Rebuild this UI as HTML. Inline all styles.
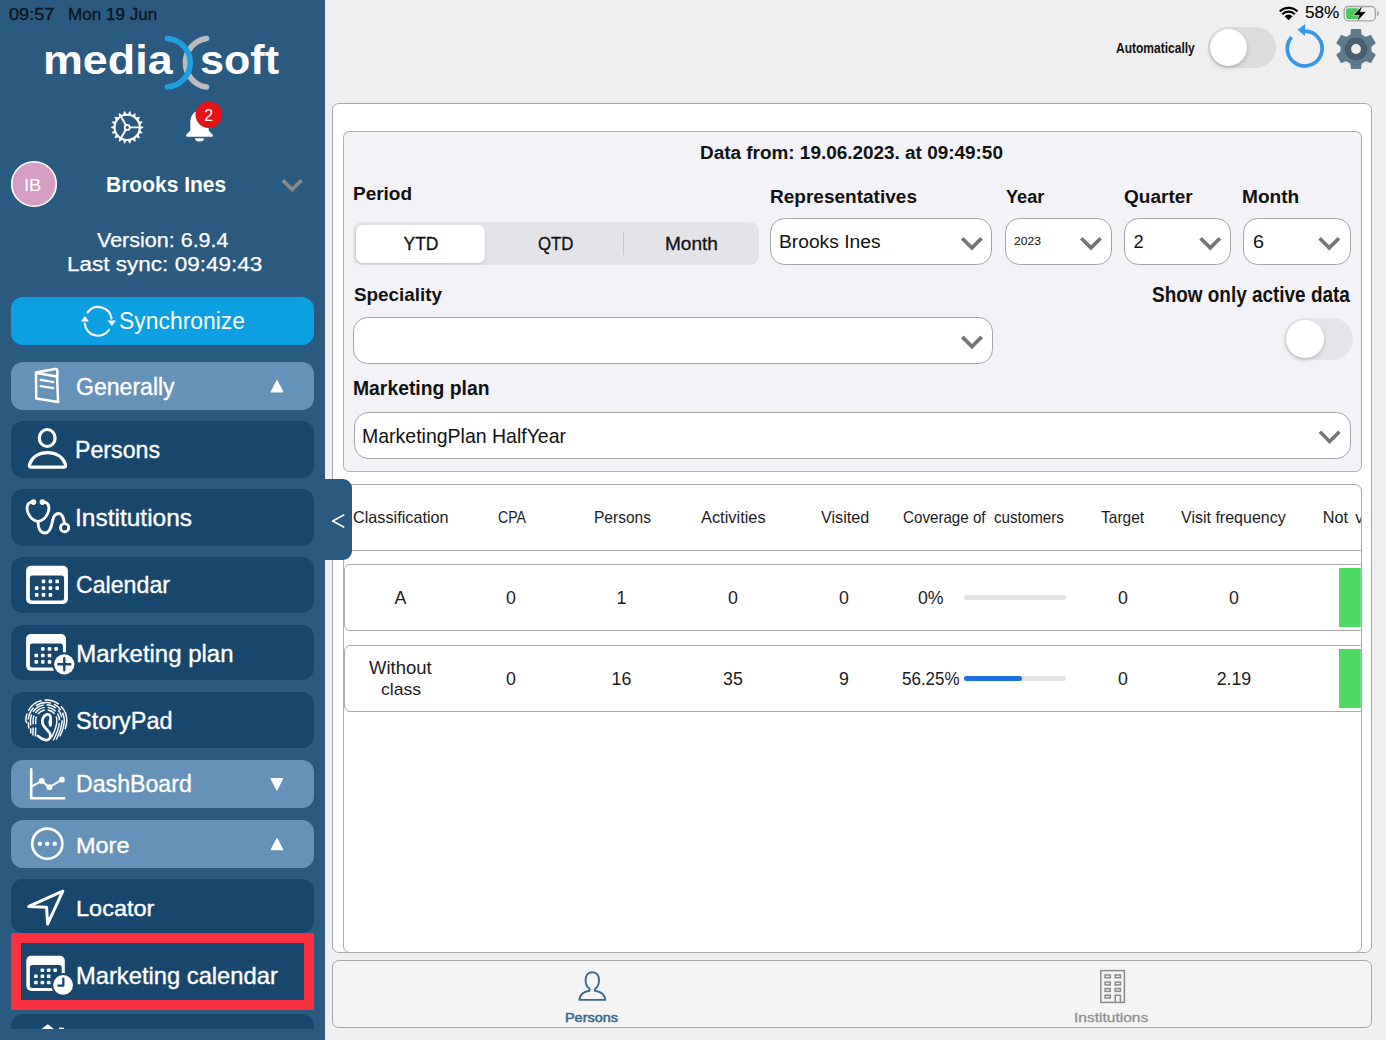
<!DOCTYPE html>
<html><head><meta charset="utf-8"><style>
html,body{margin:0;padding:0;background:#efeff0;}
#root{position:relative;width:1386px;height:1040px;overflow:hidden;background:#efeff0;font-family:"Liberation Sans", sans-serif;}
.a{position:absolute;box-sizing:border-box;}
.t{position:absolute;white-space:pre;transform-origin:0 0;font-family:"Liberation Sans", sans-serif;}
svg{position:absolute;overflow:visible;}
.item{position:absolute;left:11px;width:303px;border-radius:12px;background:#18476e;}
.hdr{position:absolute;left:11px;width:303px;border-radius:12px;background:#6592b8;}
.dd{position:absolute;box-sizing:border-box;background:#fff;border:1.4px solid #a4a4a6;border-radius:14.5px;}
.row{position:absolute;box-sizing:border-box;background:#fff;border:1px solid #ababab;border-radius:6px;}

</style></head><body><div id=root>
<!-- sidebar -->
<div class=a style="left:0;top:0;width:325px;height:1040px;background:#2b5a80;"></div>
<div class=a style="left:325px;top:0;width:1.5px;height:1040px;background:#e6eef6;"></div>
<div class=a style="left:11px;top:297px;width:303px;height:48px;border-radius:12px;background:#0c9fe2;"></div>
<div class=hdr style="top:362px;height:48px;"></div>
<div class=item style="top:421px;height:57px;"></div>
<div class=item style="top:489px;height:57px;"></div>
<div class=item style="top:557px;height:56px;"></div>
<div class=item style="top:625px;height:55px;"></div>
<div class=item style="top:692px;height:56px;"></div>
<div class=hdr style="top:760px;height:48px;"></div>
<div class=hdr style="top:820px;height:48px;"></div>
<div class=item style="top:879px;height:54px;"></div>
<div class=item style="top:943px;height:57px;"></div>
<div class=a style="left:11px;top:1014px;width:303px;height:15px;border-radius:12px 12px 0 0;background:#18476e;"></div>
<!-- red highlight -->
<div class=a style="left:10.5px;top:933px;width:303px;height:77px;border:10.5px solid #f8303f;"></div>

<!-- main card -->
<div class=a style="left:332px;top:103px;width:1040px;height:850px;background:#fff;border:1.2px solid #a8a8a8;border-radius:7px;"></div>
<!-- filter panel -->
<div class=a style="left:343px;top:130.5px;width:1018.5px;height:341.5px;background:#f2f2f7;border:1.4px solid #adadb0;border-radius:6.5px;"></div>
<!-- segmented -->
<div class=a style="left:353.3px;top:222px;width:405.7px;height:43px;background:#e3e3e8;border-radius:9px;"></div>
<div class=a style="left:356px;top:224.6px;width:129px;height:38.1px;background:#fff;border-radius:7px;box-shadow:0 1px 3px rgba(0,0,0,0.15);"></div>
<div class=a style="left:623px;top:232px;width:1px;height:23px;background:#c8c8cc;"></div>
<!-- dropdowns -->
<div class=dd style="left:770.4px;top:218.3px;width:222.1px;height:46.3px;"></div>
<div class=dd style="left:1004.7px;top:218.3px;width:107.4px;height:46.3px;"></div>
<div class=dd style="left:1124px;top:218.3px;width:107.2px;height:46.3px;"></div>
<div class=dd style="left:1243px;top:218.3px;width:107.8px;height:46.3px;"></div>
<div class=dd style="left:353.3px;top:317.3px;width:639.3px;height:46.5px;"></div>
<div class=dd style="left:353.5px;top:412px;width:997px;height:46.7px;"></div>
<!-- toggle active data -->
<div class=a style="left:1284px;top:318px;width:69px;height:41.5px;border-radius:21px;background:#e4e4e9;"></div>
<div class=a style="left:1285.5px;top:319.5px;width:38.5px;height:38.5px;border-radius:50%;background:#fff;box-shadow:0 2px 4px rgba(0,0,0,0.18);"></div>
<!-- toggle automatically -->
<div class=a style="left:1207.5px;top:27px;width:68.3px;height:41.2px;border-radius:21px;background:#dcdcde;"></div>
<div class=a style="left:1209.5px;top:29px;width:37.2px;height:37.2px;border-radius:50%;background:#fff;box-shadow:0 2px 4px rgba(0,0,0,0.2);"></div>

<!-- table container -->
<div class=a style="left:343px;top:484px;width:1018.5px;height:469px;background:#fff;border:1.4px solid #aaaaaa;border-radius:7px;"></div>
<div class=a style="left:0;top:0;width:1386px;height:1040px;clip-path:inset(485px 25.2px 88px 344px);">
<div class=a style="left:343px;top:549.8px;width:1018px;height:1.2px;background:#aaaaaa;"></div>
<div class=row style="left:344px;top:564.2px;width:1040px;height:67.1px;"></div>
<div class=row style="left:344px;top:644.5px;width:1040px;height:67.7px;"></div>
<div class=a style="left:963.8px;top:595px;width:102.2px;height:5.3px;border-radius:3px;background:#e3e3e5;"></div>
<div class=a style="left:963.8px;top:675.7px;width:102.2px;height:5.3px;border-radius:3px;background:#e3e3e5;"></div>
<div class=a style="left:963.8px;top:675.7px;width:58.2px;height:5.3px;border-radius:3px;background:#1a72e0;"></div>
<div class=a style="left:1339px;top:568.2px;width:40px;height:59px;background:#4cd964;"></div>
<div class=a style="left:1339px;top:649px;width:40px;height:59px;background:#4cd964;"></div>
<div class=t style="left:353.20px;top:509.00px;font-size:16.28px;line-height:16.28px;font-weight:400;color:#1c1c1e;transform:scaleX(0.9971);">Classification</div>
<div class=t style="left:497.50px;top:509.00px;font-size:16.28px;line-height:16.28px;font-weight:400;color:#1c1c1e;transform:scaleX(0.8676);">CPA</div>
<div class=t style="left:593.55px;top:509.00px;font-size:16.28px;line-height:16.28px;font-weight:400;color:#1c1c1e;transform:scaleX(0.9532);">Persons</div>
<div class=t style="left:701.20px;top:509.00px;font-size:16.28px;line-height:16.28px;font-weight:400;color:#1c1c1e;transform:scaleX(1.0072);">Activities</div>
<div class=t style="left:820.70px;top:509.00px;font-size:16.28px;line-height:16.28px;font-weight:400;color:#1c1c1e;transform:scaleX(0.9941);">Visited</div>
<div class=t style="left:903.00px;top:509.00px;font-size:16.28px;line-height:16.28px;font-weight:400;color:#1c1c1e;transform:scaleX(0.9320);">Coverage of  customers</div>
<div class=t style="left:1101.40px;top:509.00px;font-size:16.28px;line-height:16.28px;font-weight:400;color:#1c1c1e;transform:scaleX(0.9543);">Target</div>
<div class=t style="left:1181.40px;top:509.00px;font-size:16.28px;line-height:16.28px;font-weight:400;color:#1c1c1e;transform:scaleX(0.9846);">Visit frequency</div>
<div class=t style="left:1322.80px;top:509.00px;font-size:16.28px;line-height:16.28px;font-weight:400;color:#1c1c1e;word-spacing:2.5px;">Not visited</div>
<div class=t style="left:394.60px;top:590.00px;font-size:17.8px;line-height:17.8px;font-weight:400;color:#1c1c1e;">A</div>
<div class=t style="left:506.00px;top:590.00px;font-size:17.8px;line-height:17.8px;font-weight:400;color:#1c1c1e;">0</div>
<div class=t style="left:616.50px;top:590.00px;font-size:17.8px;line-height:17.8px;font-weight:400;color:#1c1c1e;">1</div>
<div class=t style="left:728.00px;top:590.00px;font-size:17.8px;line-height:17.8px;font-weight:400;color:#1c1c1e;">0</div>
<div class=t style="left:839.00px;top:590.00px;font-size:17.8px;line-height:17.8px;font-weight:400;color:#1c1c1e;">0</div>
<div class=t style="left:1118.00px;top:590.00px;font-size:17.8px;line-height:17.8px;font-weight:400;color:#1c1c1e;">0</div>
<div class=t style="left:1229.00px;top:590.00px;font-size:17.8px;line-height:17.8px;font-weight:400;color:#1c1c1e;">0</div>
<div class=t style="left:918.20px;top:589.00px;font-size:18.02px;line-height:18.02px;font-weight:400;color:#1c1c1e;transform:scaleX(0.9839);">0%</div>
<div class=t style="left:506.00px;top:671.00px;font-size:17.8px;line-height:17.8px;font-weight:400;color:#1c1c1e;">0</div>
<div class=t style="left:611.56px;top:671.00px;font-size:17.8px;line-height:17.8px;font-weight:400;color:#1c1c1e;">16</div>
<div class=t style="left:723.06px;top:671.00px;font-size:17.8px;line-height:17.8px;font-weight:400;color:#1c1c1e;">35</div>
<div class=t style="left:839.00px;top:671.00px;font-size:17.8px;line-height:17.8px;font-weight:400;color:#1c1c1e;">9</div>
<div class=t style="left:1118.00px;top:671.00px;font-size:17.8px;line-height:17.8px;font-weight:400;color:#1c1c1e;">0</div>
<div class=t style="left:1216.64px;top:671.00px;font-size:17.8px;line-height:17.8px;font-weight:400;color:#1c1c1e;">2.19</div>
<div class=t style="left:902.30px;top:671.00px;font-size:17.88px;line-height:17.88px;font-weight:400;color:#1c1c1e;transform:scaleX(0.9507);">56.25%</div>
<div class=t style="left:369.30px;top:659.00px;font-size:18.02px;line-height:18.02px;font-weight:400;color:#1c1c1e;transform:scaleX(1.0267);">Without</div>
<div class=t style="left:380.60px;top:681.00px;font-size:17.0px;line-height:17.0px;font-weight:400;color:#1c1c1e;transform:scaleX(1.0358);">class</div>
</div>

<!-- tab bar -->
<div class=a style="left:332px;top:959.8px;width:1040px;height:67.8px;background:#f4f4f4;border:1.2px solid #a8a8a8;border-radius:7px;"></div>

<svg width="1386" height="1040" style="left:0;top:0;" viewBox="0 0 1386 1040">
<!-- logo arcs -->
<path d="M206.5,38.5 A24.5,24.5 0 0 0 206.5,87" fill="none" stroke="#b8bcc3" stroke-width="5.6" stroke-linecap="round"/>
<path d="M167.5,38.5 A24.3,24.3 0 0 1 167.5,87" fill="none" stroke="#1fa0de" stroke-width="5.6" stroke-linecap="round"/>
<!-- sidebar gear -->
<g transform="translate(127.2,127.4)" fill="none" stroke="#fff">
  <circle r="12.6" stroke-width="2.1"/>
  <circle r="2.5" stroke-width="1.8"/>
  <path d="M2.5,0 L12.6,0 M-1.25,-2.17 L-6.3,-10.9 M-1.25,2.17 L-6.3,10.9" stroke-width="1.9"/>
  <g fill="#fff" stroke="none">
    <path d="M12.6,-1.9 L16.2,-0.45 L16.2,0.45 L12.6,1.9 Z" transform="rotate(0)"/>
    <path d="M12.6,-1.9 L16.2,-0.45 L16.2,0.45 L12.6,1.9 Z" transform="rotate(20)"/>
    <path d="M12.6,-1.9 L16.2,-0.45 L16.2,0.45 L12.6,1.9 Z" transform="rotate(40)"/>
    <path d="M12.6,-1.9 L16.2,-0.45 L16.2,0.45 L12.6,1.9 Z" transform="rotate(60)"/>
    <path d="M12.6,-1.9 L16.2,-0.45 L16.2,0.45 L12.6,1.9 Z" transform="rotate(80)"/>
    <path d="M12.6,-1.9 L16.2,-0.45 L16.2,0.45 L12.6,1.9 Z" transform="rotate(100)"/>
    <path d="M12.6,-1.9 L16.2,-0.45 L16.2,0.45 L12.6,1.9 Z" transform="rotate(120)"/>
    <path d="M12.6,-1.9 L16.2,-0.45 L16.2,0.45 L12.6,1.9 Z" transform="rotate(140)"/>
    <path d="M12.6,-1.9 L16.2,-0.45 L16.2,0.45 L12.6,1.9 Z" transform="rotate(160)"/>
    <path d="M12.6,-1.9 L16.2,-0.45 L16.2,0.45 L12.6,1.9 Z" transform="rotate(180)"/>
    <path d="M12.6,-1.9 L16.2,-0.45 L16.2,0.45 L12.6,1.9 Z" transform="rotate(200)"/>
    <path d="M12.6,-1.9 L16.2,-0.45 L16.2,0.45 L12.6,1.9 Z" transform="rotate(220)"/>
    <path d="M12.6,-1.9 L16.2,-0.45 L16.2,0.45 L12.6,1.9 Z" transform="rotate(240)"/>
    <path d="M12.6,-1.9 L16.2,-0.45 L16.2,0.45 L12.6,1.9 Z" transform="rotate(260)"/>
    <path d="M12.6,-1.9 L16.2,-0.45 L16.2,0.45 L12.6,1.9 Z" transform="rotate(280)"/>
    <path d="M12.6,-1.9 L16.2,-0.45 L16.2,0.45 L12.6,1.9 Z" transform="rotate(300)"/>
    <path d="M12.6,-1.9 L16.2,-0.45 L16.2,0.45 L12.6,1.9 Z" transform="rotate(320)"/>
    <path d="M12.6,-1.9 L16.2,-0.45 L16.2,0.45 L12.6,1.9 Z" transform="rotate(340)"/>
  </g>
</g>
<!-- bell -->
<path d="M199.5,111 C192.5,111 190.3,117 190.3,124 L190.3,130.5 L186.5,134.5 Q185.3,136.8 188,136.8 L211,136.8 Q213.7,136.8 212.5,134.5 L208.7,130.5 L208.7,124 C208.7,117 206.5,111 199.5,111 Z" fill="#fff"/>
<path d="M195,138.3 L204,138.3 A4.5,3.2 0 0 1 195,138.3 Z" fill="#fff"/>
<circle cx="208.8" cy="114.7" r="13.3" fill="#e5121a"/>
<!-- avatar -->
<circle cx="34" cy="184" r="22.3" fill="#d69dc5" stroke="#fff" stroke-width="1.6"/>
<!-- user chevron -->
<path transform="translate(270.8,163.6) scale(1.78)" d="M16.59 8.59L12 13.17 7.41 8.59 6 10l6 6 6-6z" fill="#8a8a8a"/>
<!-- sync icon -->
<g fill="none" stroke="#fff" stroke-width="2.1" stroke-linecap="round">
  <path d="M87.7,312.3 A13.3,13.3 0 0 1 111.5,318.5"/>
  <path d="M109.1,329.7 A13.3,13.3 0 0 1 84.7,323.5"/>
</g>
<path d="M107.6,320.4 L116,320.4 L111.8,326 Z M80.8,321.6 L88.9,321.6 L84.9,316.1 Z" fill="#fff"/>
<!-- book icon (Generally) -->
<g fill="none" stroke="#fff" stroke-width="2.5" stroke-linejoin="round" stroke-linecap="round">
  <path d="M36,373 L57,376.4 L58.1,402 L36.2,398.6 Z"/>
  <path d="M36,372.6 L55,368.9 Q57.4,368.7 57.4,371.2 L57.4,376"/>
  <path d="M40.6,379.9 L53.3,382 M40.6,386.1 L53.3,388.2" stroke-width="2.2"/>
</g>
<path d="M271.3,391.8 L282.7,391.8 L277,380.8 Z" fill="#fff" stroke="#fff" stroke-width="1.3" stroke-linejoin="round"/>
<!-- person icon -->
<g fill="none" stroke="#fff" stroke-width="3.2" stroke-linejoin="round">
  <ellipse cx="47.2" cy="438" rx="7.9" ry="8.5"/>
  <path d="M31,467.1 Q28.8,467.1 29.5,464.4 C32,457.2 38.5,452.6 47.5,452.6 C56.5,452.6 63,457.2 65.5,464.4 Q66.2,467.1 64,467.1 Z"/>
</g>
<!-- stethoscope -->
<g fill="none" stroke="#fff" stroke-width="2.9" stroke-linecap="round">
  <path d="M31.2,502.1 C26.5,503 26.3,509 28.3,513.5 C30.3,518 34,520.8 38,521.6 C42,520.8 45.7,518 47.7,513.5 C49.7,509 49.5,503 44.8,502.1"/>
  <path d="M38,521.6 C38,527.5 40,533 45,533 C50,533 51.5,527 52.5,521 C53.5,515.5 55.5,513.5 58.8,513.5 C62,513.5 63.5,517 64.5,523.3"/>
  <circle cx="64.6" cy="527.7" r="4.1"/>
</g>
<circle cx="33.5" cy="502.1" r="2.8" fill="#fff"/>
<circle cx="42.4" cy="502.1" r="2.8" fill="#fff"/>
<!-- calendar -->
<g>
  <rect x="26.1" y="565.8" width="41.8" height="38.2" rx="4.8" fill="#fff"/>
  <rect x="29.9" y="575.4" width="34.2" height="25" rx="2.5" fill="#18476e"/>
  <g fill="#fff">
    <rect x="41.7" y="579.6" width="3.6" height="3.6" rx="0.8"/><rect x="48.6" y="579.6" width="3.6" height="3.6" rx="0.8"/><rect x="55.4" y="579.6" width="3.6" height="3.6" rx="0.8"/>
    <rect x="34.9" y="586.3" width="3.6" height="3.6" rx="0.8"/><rect x="41.7" y="586.3" width="3.6" height="3.6" rx="0.8"/><rect x="48.6" y="586.3" width="3.6" height="3.6" rx="0.8"/><rect x="55.4" y="586.3" width="3.6" height="3.6" rx="0.8"/>
    <rect x="34.9" y="593.1" width="3.6" height="3.6" rx="0.8"/><rect x="41.7" y="593.1" width="3.6" height="3.6" rx="0.8"/><rect x="48.6" y="593.1" width="3.6" height="3.6" rx="0.8"/>
  </g>
</g>
<!-- marketing plan icon -->
<g>
  <rect x="26.1" y="634" width="39.9" height="36.8" rx="4.8" fill="#fff"/>
  <rect x="29.9" y="643.4" width="33" height="24" rx="2.5" fill="#18476e"/>
  <g fill="#fff">
    <rect x="41" y="647.1" width="3.6" height="3.6" rx="0.9"/><rect x="47.7" y="647.1" width="3.6" height="3.6" rx="0.9"/><rect x="54.3" y="647.1" width="3.6" height="3.6" rx="0.9"/>
    <rect x="34.5" y="653.7" width="3.6" height="3.6" rx="0.9"/><rect x="41" y="653.7" width="3.6" height="3.6" rx="0.9"/><rect x="47.7" y="653.7" width="3.6" height="3.6" rx="0.9"/>
    <rect x="34.5" y="660.1" width="3.6" height="3.6" rx="0.9"/><rect x="41" y="660.1" width="3.6" height="3.6" rx="0.9"/><rect x="47.7" y="660.1" width="3.6" height="3.6" rx="0.9"/>
  </g>
  <circle cx="64.3" cy="664.3" r="12" fill="#18476e"/>
  <circle cx="64.3" cy="664.3" r="10.1" fill="#fff"/>
  <path d="M58.3,664.3 L70.3,664.3 M64.3,658.3 L64.3,670.3" stroke="#18476e" stroke-width="2.4" stroke-linecap="round"/>
</g>
<!-- storypad fingerprint -->
<g fill="none" stroke="#fff" stroke-width="1.45" stroke-linecap="butt">
<path d="M27.0,723.0 Q25.799999999999997,721.4 25.8,720.5 A20.5,20.5 0 0 1 66.8,720.5 Q66.8,725.7 63.5,733.5" stroke-dasharray="10 3 17 3 15 3 25"/>
<path d="M28.8,728.5 Q28.299999999999997,723.3 28.3,720.5 A18.0,18.0 0 0 1 64.3,720.5 Q64.3,726.9 59.8,736.5" stroke-dasharray="6 3 13 3 16 3 9 3 30"/>
<path d="M30.8,733.5 Q30.499999999999996,725.0 30.5,720.5 A15.8,15.8 0 0 1 62.1,720.5 Q62.099999999999994,728.1 56.3,739.5" stroke-dasharray="5 3 11 3 13 3 10 3 8 3 30"/>
<path d="M33.0,735.5 Q33.099999999999994,725.8 33.1,720.5 A13.2,13.2 0 0 1 59.5,720.5 Q59.5,728.5 53.3,740.5" stroke-dasharray="8 3 9 3 11 3 9 3 7 3 30"/>
<path d="M35.5,736.5 Q35.699999999999996,726.1 35.7,720.5 A10.6,10.6 0 0 1 56.9,720.5 Q56.9,727.3 51.5,737.5" stroke-dasharray="9 3 8 3 8 3 8 3 30"/>
</g>
<path d="M50.3,725.5 C50.6,721 51.6,716.3 49.4,714.9 C46.8,713.4 42.4,716 42.3,721.5 C42.2,727.3 48.6,729.6 50.1,734 C51.4,738 48.6,740.6 45,739.9 C42,739.3 39.6,737.6 37.9,735.9" fill="none" stroke="#fff" stroke-width="2.7" stroke-linecap="round"/>
<ellipse cx="50.3" cy="722.5" rx="1.8" ry="3.2" fill="#fff"/>
<!-- dashboard icon -->
<g fill="none" stroke="#fff" stroke-linecap="round" stroke-linejoin="round">
  <path d="M31.2,769.2 L31.2,798.3 L64.3,798.3" stroke-width="2.6"/>
  <path d="M32,786.3 L41.7,780.9 L49.4,787.2 L61.9,779.7" stroke-width="2"/>
</g>
<g fill="#fff"><circle cx="41.7" cy="780.9" r="2.9"/><circle cx="49.4" cy="787.2" r="2.9"/><circle cx="61.9" cy="779.7" r="2.9"/></g>
<path d="M271.2,778.7 L282.5,778.7 L276.85,789.9 Z" fill="#fff" stroke="#fff" stroke-width="1.3" stroke-linejoin="round"/>
<!-- more icon -->
<circle cx="47.3" cy="843.7" r="15.1" fill="none" stroke="#fff" stroke-width="2.7"/>
<g fill="#fff"><circle cx="39.8" cy="843.8" r="2.2"/><circle cx="47.3" cy="843.8" r="2.2"/><circle cx="54.8" cy="843.8" r="2.2"/></g>
<path d="M271.4,849.5 L282.6,849.5 L277,838.7 Z" fill="#fff" stroke="#fff" stroke-width="1.3" stroke-linejoin="round"/>
<!-- locator -->
<path d="M62.8,891.2 L28.8,906.4 L46.6,907.3 L47.6,924.1 Z" fill="none" stroke="#fff" stroke-width="3" stroke-linejoin="round"/>
<!-- marketing calendar icon -->
<g>
  <rect x="26.3" y="955.8" width="38.5" height="35.1" rx="4.8" fill="#fff"/>
  <rect x="29.9" y="965.1" width="31.8" height="22.9" rx="2.5" fill="#18476e"/>
  <g fill="#fff">
    <rect x="40.6" y="968.4" width="3.6" height="3.6" rx="0.9"/><rect x="46.9" y="968.4" width="3.6" height="3.6" rx="0.9"/><rect x="53.4" y="968.4" width="3.6" height="3.6" rx="0.9"/>
    <rect x="34.1" y="974.5" width="3.6" height="3.6" rx="0.9"/><rect x="40.6" y="974.5" width="3.6" height="3.6" rx="0.9"/><rect x="46.9" y="974.5" width="3.6" height="3.6" rx="0.9"/>
    <rect x="34.1" y="980.7" width="3.6" height="3.6" rx="0.9"/><rect x="40.6" y="980.7" width="3.6" height="3.6" rx="0.9"/><rect x="46.9" y="980.7" width="3.6" height="3.6" rx="0.9"/>
  </g>
  <circle cx="63.1" cy="984.9" r="11.8" fill="#18476e"/>
  <circle cx="63.1" cy="984.9" r="9.9" fill="#fff"/>
  <path d="M63.3,978.6 L63.3,985.6 L58.3,985.6" fill="none" stroke="#18476e" stroke-width="2.3" stroke-linecap="round" stroke-linejoin="round"/>
</g>
<!-- partial item icon -->
<path d="M41.5,1029 L47.8,1024.3 L54,1029 Z" fill="#fff"/>
<rect x="59" y="1027.6" width="5" height="1.4" fill="#fff"/>

<!-- top right: wifi -->
<g fill="#000">
  <path d="M1288.6,20.2 L1284.6,16.2 A5.7,5.7 0 0 1 1292.6,16.2 Z"/>
  <path d="M1282.4,14.2 A8.8,8.8 0 0 1 1294.8,14.2" fill="none" stroke="#000" stroke-width="2.3"/>
  <path d="M1279.8,11.5 A12.6,12.6 0 0 1 1297.4,11.5" fill="none" stroke="#000" stroke-width="2.3"/>
</g>
<!-- battery -->
<rect x="1344.2" y="6.5" width="31.2" height="14.3" rx="4" fill="none" stroke="#a5a5a5" stroke-width="1.3"/>
<rect x="1346" y="8.3" width="13" height="10.7" rx="2.2" fill="#4cc85a"/>
<path d="M1377.1,10.8 Q1379,11.5 1379,13.6 Q1379,15.7 1377.1,16.4 Z" fill="#a5a5a5"/>
<path d="M1363.2,4.9 L1353.2,15.3 L1359.2,15.3 L1356.6,22 L1366.2,11.7 L1360.2,11.7 Z" fill="#000" stroke="#efeff0" stroke-width="0.6"/>
<!-- refresh -->
<path d="M1304.75,31.15 A17.4,17.4 0 1 1 1291.6,37.1" fill="none" stroke="#3497e8" stroke-width="3.7"/>
<path d="M1297.6,29.8 L1305.2,23.9 L1304.9,35.9 Z" fill="#3497e8"/>
<!-- settings gear -->
<g transform="translate(1356,49)">
  <g fill="#5e7b8d">
    <circle r="15.5"/>
    <path d="M-5,-20 L5,-20 L6,-12 L-6,-12 Z"/>
    <path d="M-5,-20 L5,-20 L6,-12 L-6,-12 Z" transform="rotate(60)"/>
    <path d="M-5,-20 L5,-20 L6,-12 L-6,-12 Z" transform="rotate(120)"/>
    <path d="M-5,-20 L5,-20 L6,-12 L-6,-12 Z" transform="rotate(180)"/>
    <path d="M-5,-20 L5,-20 L6,-12 L-6,-12 Z" transform="rotate(240)"/>
    <path d="M-5,-20 L5,-20 L6,-12 L-6,-12 Z" transform="rotate(300)"/>
  </g>
  <circle r="11.4" fill="#475f6e"/>
  <circle r="4.9" fill="#efeff0"/>
</g>

<!-- dropdown chevrons (material expand_more, scale 1.83) -->
<g fill="#767676">
  <path transform="translate(949.9,221.2) scale(1.83)" d="M16.59 8.59L12 13.17 7.41 8.59 6 10l6 6 6-6z"/>
  <path transform="translate(1069,221.2) scale(1.83)" d="M16.59 8.59L12 13.17 7.41 8.59 6 10l6 6 6-6z"/>
  <path transform="translate(1188.3,221.2) scale(1.83)" d="M16.59 8.59L12 13.17 7.41 8.59 6 10l6 6 6-6z"/>
  <path transform="translate(1307.3,221.2) scale(1.83)" d="M16.59 8.59L12 13.17 7.41 8.59 6 10l6 6 6-6z"/>
  <path transform="translate(950,319.9) scale(1.83)" d="M16.59 8.59L12 13.17 7.41 8.59 6 10l6 6 6-6z"/>
  <path transform="translate(1307.7,414.8) scale(1.83)" d="M16.59 8.59L12 13.17 7.41 8.59 6 10l6 6 6-6z"/>
</g>

<!-- tab bar icons -->
<path d="M592.3,972.2 C587.6,972.2 585.6,976 585.6,980.2 C585.6,984.2 587.3,987.2 589.6,989 L589.6,990.8 C583.5,991.8 579.6,995 579.4,999.9 L605.2,999.9 C605,995 601.1,991.8 595,990.8 L595,989 C597.3,987.2 599,984.2 599,980.2 C599,976 597,972.2 592.3,972.2 Z" fill="none" stroke="#3d6a8b" stroke-width="1.9" stroke-linejoin="round"/>
<g fill="none" stroke="#8a8a8a" stroke-width="1.5">
  <rect x="1100.8" y="970.6" width="23.6" height="31.8"/>
  <rect x="1105.1" y="974.9" width="5.2" height="2.8"/><rect x="1115.2" y="974.9" width="5.2" height="2.8"/>
  <rect x="1105.1" y="982.1" width="5.2" height="2.8"/><rect x="1115.2" y="982.1" width="5.2" height="2.8"/>
  <rect x="1105.1" y="988.6" width="5.2" height="2.8"/><rect x="1115.2" y="988.6" width="5.2" height="2.8"/>
  <rect x="1105.1" y="995.2" width="5.2" height="2.8"/>
  <path d="M1115.2,1002.4 L1115.2,995.2 L1120.4,995.2 L1120.4,1002.4"/>
</g>
</svg>

<div class=t style="left:8.60px;top:6.00px;font-size:17.01px;line-height:17.01px;font-weight:400;color:#0b1520;-webkit-text-stroke:0.35px #0b1520;transform:scaleX(1.0645);">09:57</div>
<div class=t style="left:68.30px;top:6.00px;font-size:17.01px;line-height:17.01px;font-weight:400;color:#0b1520;-webkit-text-stroke:0.35px #0b1520;transform:scaleX(1.0037);">Mon 19 Jun</div>
<div class=t style="left:1304.70px;top:5.00px;font-size:15.84px;line-height:15.84px;font-weight:400;color:#000;-webkit-text-stroke:0.1px #000;transform:scaleX(1.0852);">58%</div>
<div class=t style="left:43.39px;top:40.00px;font-size:40.51px;line-height:40.51px;font-weight:700;color:#ffffff;transform:scaleX(1.1071);">media</div>
<div class=t style="left:199.94px;top:40.00px;font-size:40.51px;line-height:40.51px;font-weight:700;color:#ffffff;transform:scaleX(1.0639);">soft</div>
<div class=t style="left:204.30px;top:108.00px;font-size:16px;line-height:16px;font-weight:400;color:#ffffff;">2</div>
<div class=t style="left:24.29px;top:178.00px;font-size:16.57px;line-height:16.57px;font-weight:400;color:#ffffff;transform:scaleX(1.1095);">IB</div>
<div class=t style="left:106.04px;top:174.00px;font-size:21.95px;line-height:21.95px;font-weight:700;color:#ffffff;transform:scaleX(0.9568);">Brooks Ines</div>
<div class=t style="left:97.00px;top:231.00px;font-size:19.62px;line-height:19.62px;font-weight:400;color:#ffffff;-webkit-text-stroke:0.25px #ffffff;transform:scaleX(1.0966);">Version: 6.9.4</div>
<div class=t style="left:66.86px;top:255.00px;font-size:19.77px;line-height:19.77px;font-weight:400;color:#ffffff;-webkit-text-stroke:0.25px #ffffff;transform:scaleX(1.1392);">Last sync: 09:49:43</div>
<div class=t style="left:118.64px;top:309.00px;font-size:23.98px;line-height:23.98px;font-weight:400;color:#ffffff;transform:scaleX(0.9551);">Synchronize</div>
<div class=t style="left:76.34px;top:375.00px;font-size:23.98px;line-height:23.98px;font-weight:400;color:#ffffff;-webkit-text-stroke:0.35px #ffffff;transform:scaleX(0.9616);">Generally</div>
<div class=t style="left:75.40px;top:438.00px;font-size:24.42px;line-height:24.42px;font-weight:400;color:#ffffff;-webkit-text-stroke:0.35px #ffffff;transform:scaleX(0.9493);">Persons</div>
<div class=t style="left:75.24px;top:506.00px;font-size:23.84px;line-height:23.84px;font-weight:400;color:#ffffff;-webkit-text-stroke:0.35px #ffffff;transform:scaleX(1.0278);">Institutions</div>
<div class=t style="left:76.32px;top:574.00px;font-size:23.69px;line-height:23.69px;font-weight:400;color:#ffffff;-webkit-text-stroke:0.35px #ffffff;transform:scaleX(0.9775);">Calendar</div>
<div class=t style="left:76.30px;top:642.00px;font-size:23.98px;line-height:23.98px;font-weight:400;color:#ffffff;-webkit-text-stroke:0.35px #ffffff;">Marketing plan</div>
<div class=t style="left:76.34px;top:709.00px;font-size:24.42px;line-height:24.42px;font-weight:400;color:#ffffff;-webkit-text-stroke:0.35px #ffffff;transform:scaleX(0.9610);">StoryPad</div>
<div class=t style="left:76.32px;top:773.00px;font-size:23.55px;line-height:23.55px;font-weight:400;color:#ffffff;-webkit-text-stroke:0.35px #ffffff;transform:scaleX(0.9832);">DashBoard</div>
<div class=t style="left:76.24px;top:835.00px;font-size:22.24px;line-height:22.24px;font-weight:400;color:#ffffff;-webkit-text-stroke:0.35px #ffffff;transform:scaleX(1.0555);">More</div>
<div class=t style="left:76.26px;top:898.00px;font-size:22.53px;line-height:22.53px;font-weight:400;color:#ffffff;-webkit-text-stroke:0.35px #ffffff;transform:scaleX(1.0442);">Locator</div>
<div class=t style="left:76.29px;top:965.00px;font-size:23.4px;line-height:23.4px;font-weight:400;color:#ffffff;-webkit-text-stroke:0.35px #ffffff;transform:scaleX(1.0145);">Marketing calendar</div>
<div class=t style="left:1116.40px;top:41.00px;font-size:14.54px;line-height:14.54px;font-weight:700;color:#111;transform:scaleX(0.8264);">Automatically</div>
<div class=t style="left:700.01px;top:143.00px;font-size:19.19px;line-height:19.19px;font-weight:700;color:#111111;transform:scaleX(0.9861);">Data from: 19.06.2023. at 09:49:50</div>
<div class=t style="left:353.23px;top:186.00px;font-size:17.73px;line-height:17.73px;font-weight:700;color:#111111;transform:scaleX(1.0710);">Period</div>
<div class=t style="left:403.50px;top:236.00px;font-size:17.44px;line-height:17.44px;font-weight:400;color:#111111;-webkit-text-stroke:0.3px #111111;">YTD</div>
<div class=t style="left:538.40px;top:236.00px;font-size:17.44px;line-height:17.44px;font-weight:400;color:#111111;-webkit-text-stroke:0.3px #111111;transform:scaleX(0.9637);">QTD</div>
<div class=t style="left:664.91px;top:236.00px;font-size:17.44px;line-height:17.44px;font-weight:400;color:#111111;-webkit-text-stroke:0.3px #111111;transform:scaleX(1.0927);">Month</div>
<div class=t style="left:769.98px;top:188.00px;font-size:18.6px;line-height:18.6px;font-weight:700;color:#111111;transform:scaleX(1.0231);">Representatives</div>
<div class=t style="left:1005.50px;top:188.00px;font-size:18.46px;line-height:18.46px;font-weight:700;color:#111111;transform:scaleX(0.9823);">Year</div>
<div class=t style="left:1124.00px;top:188.00px;font-size:18.46px;line-height:18.46px;font-weight:700;color:#111111;transform:scaleX(1.0327);">Quarter</div>
<div class=t style="left:1242.47px;top:188.00px;font-size:18.46px;line-height:18.46px;font-weight:700;color:#111111;transform:scaleX(1.0347);">Month</div>
<div class=t style="left:778.98px;top:233.00px;font-size:18.9px;line-height:18.9px;font-weight:400;color:#111111;transform:scaleX(1.0180);">Brooks Ines</div>
<div class=t style="left:1014.00px;top:235.00px;font-size:11.63px;line-height:11.63px;font-weight:400;color:#111111;transform:scaleX(1.0446);">2023</div>
<div class=t style="left:1133.40px;top:233.00px;font-size:18.31px;line-height:18.31px;font-weight:400;color:#111111;">2</div>
<div class=t style="left:1252.50px;top:233.00px;font-size:18.31px;line-height:18.31px;font-weight:400;color:#111111;transform:scaleX(1.0800);">6</div>
<div class=t style="left:353.75px;top:285.00px;font-size:19.04px;line-height:19.04px;font-weight:700;color:#111111;transform:scaleX(0.9914);">Speciality</div>
<div class=t style="left:1152.00px;top:284.00px;font-size:21.22px;line-height:21.22px;font-weight:700;color:#111111;transform:scaleX(0.8924);">Show only active data</div>
<div class=t style="left:353.01px;top:379.00px;font-size:19.62px;line-height:19.62px;font-weight:700;color:#111111;transform:scaleX(0.9861);">Marketing plan</div>
<div class=t style="left:362.03px;top:426.00px;font-size:20.2px;line-height:20.2px;font-weight:400;color:#111111;transform:scaleX(0.9653);">MarketingPlan HalfYear</div>
<div class=t style="left:564.60px;top:1011.00px;font-size:13.08px;line-height:13.08px;font-weight:400;color:#3c6a8c;-webkit-text-stroke:0.55px #3c6a8c;transform:scaleX(1.1025);">Persons</div>
<div class=t style="left:1074.31px;top:1011.00px;font-size:13.08px;line-height:13.08px;font-weight:400;color:#8e8e8e;-webkit-text-stroke:0.3px #8e8e8e;transform:scaleX(1.1859);">Institutions</div>
<!-- collapse tab -->
<div class=a style="left:325px;top:479px;width:27px;height:81px;background:#2b5a80;border-radius:0 9px 9px 0;"></div>
<svg width="1386" height="1040" style="left:0;top:0;" viewBox="0 0 1386 1040">
<path d="M343.8,515 L332.6,521 L343.8,527" fill="none" stroke="#fff" stroke-width="1.5" stroke-linecap="round" stroke-linejoin="round"/>
</svg>

</div></body></html>
